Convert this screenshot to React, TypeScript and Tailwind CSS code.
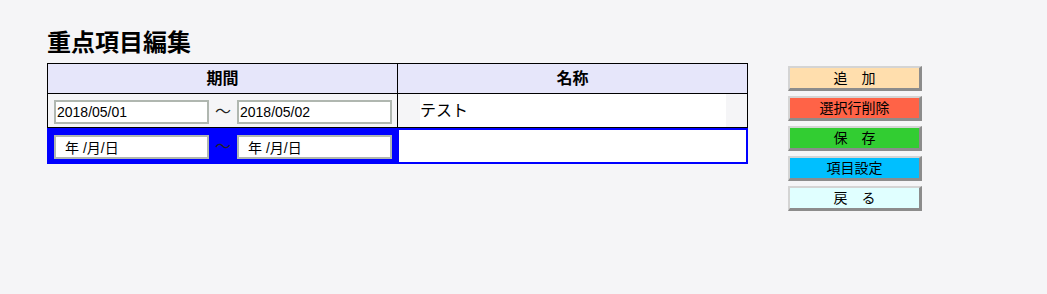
const jp = "font-['Liberation_Sans','Noto_Sans_CJK_JP',sans-serif]";

const buttons = [
  { label: "追　加", cls: "bg-[#ffdead]" },
  { label: "選択行削除", cls: "bg-[#ff6347]" },
  { label: "保　存", cls: "bg-[#32cd32]" },
  { label: "項目設定", cls: "bg-[#00bfff]" },
  { label: "戻　る", cls: "bg-[#e0ffff]" },
];

const DateBox = ({ value, empty }: { value: string; empty?: boolean }) => (
  <input
    type="text"
    readOnly
    value={value}
    className={`h-[24px] w-[155px] border-2 border-[#b0b7b0] bg-white text-[14px] leading-none text-black outline-none ${
      empty ? "pl-[9px]" : "pl-[1px]"
    }`}
  />
);

const Tilde = () => (
  <span className="flex h-[24px] w-[28px] items-center justify-center text-[16px] leading-none text-[#222]">
    ～
  </span>
);

export default function App() {
  return (
    <div className={`min-h-screen bg-[#f5f5f7] ${jp} text-black`}>
      <div className="flex pl-[47px] pt-[30px]">
        <div className="w-[701px]">
          <h1 className="mb-[8px] h-[25px] text-[24px] font-bold leading-[25px]">重点項目編集</h1>

          <div className="border border-b-0 border-black">
            <div className="flex h-[30px] border-b border-black bg-[#e6e6fa] text-[16px] font-bold">
              <div className="flex w-[350px] items-center justify-center border-r border-black">期間</div>
              <div className="flex flex-1 items-center justify-center">名称</div>
            </div>
            <div className="flex h-[34px] border-b border-black">
              <div className="flex w-[350px] items-start border-r border-black pl-[6px] pt-[6px]">
                <DateBox value="2018/05/01" />
                <Tilde />
                <DateBox value="2018/05/02" />
              </div>
              <div className="flex flex-1 pl-[22px] pr-[21px]">
                <div className="flex flex-1 items-center bg-white text-[16px]">テスト</div>
              </div>
            </div>
          </div>

          <div className="flex h-[36px] bg-[#0000ff] p-[2px]">
            <div className="flex w-[350px] items-start pl-[5px] pt-[5px]">
              <DateBox value="年 /月/日" empty />
              <Tilde />
              <DateBox value="年 /月/日" empty />
            </div>
            <div className="flex-1 bg-white" />
          </div>
        </div>

        <div className="ml-[40px] mt-[36px] flex w-[134px] flex-col gap-[5px]">
          {buttons.map((b) => (
            <button
              key={b.label}
              className={`h-[25px] border-t-2 border-l-2 border-b-[3px] border-r-[3px] border-t-[#d4d4d4] border-l-[#d4d4d4] border-b-[#8c8c8c] border-r-[#8c8c8c] text-[14px] leading-none ${b.cls}`}
            >
              {b.label}
            </button>
          ))}
        </div>
      </div>
    </div>
  );
}
